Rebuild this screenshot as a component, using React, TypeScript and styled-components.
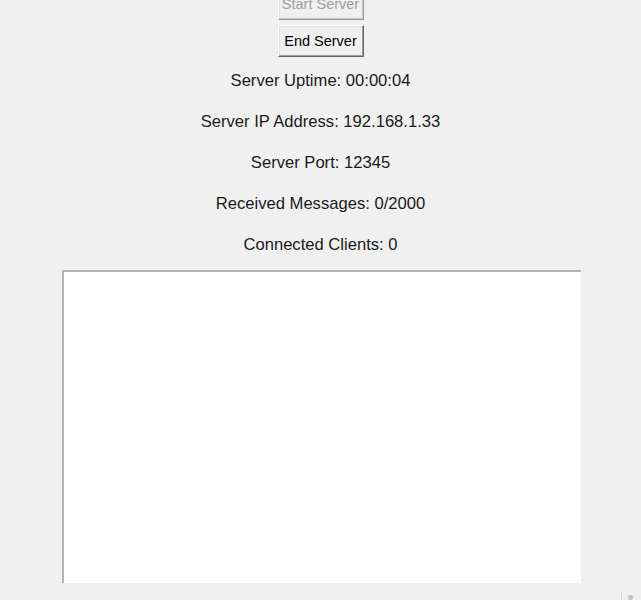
import React from "react";
import styled, { createGlobalStyle } from "styled-components";

const Global = createGlobalStyle`
  html, body { margin: 0; padding: 0; background: #f0f0f0; }
  body { font-family: "Liberation Sans", Arial, sans-serif; overflow: hidden; }
`;

const Window = styled.div`
  width: 641px;
  height: 600px;
  background: #f0f0f0;
  display: flex;
  flex-direction: column;
  align-items: center;
  overflow: hidden;
  position: relative;
`;

const Button = styled.button<{ $disabled?: boolean; $first?: boolean }>`
  box-sizing: border-box;
  width: 86px;
  height: 32px;
  margin-top: ${(p) => (p.$first ? "-12px" : "5px")};
  padding: 0;
  background: #f0f0f0;
  font-family: "Liberation Sans", Arial, sans-serif;
  font-size: 14.5px;
  color: ${(p) => (p.$disabled ? "#a0a0a0" : "#000")};
  border-style: solid;
  border-width: 1px;
  border-color: ${(p) =>
    p.$disabled ? "#ffffff #9a9a9a #9a9a9a #ffffff" : "#ffffff #646464 #646464 #ffffff"};
  box-shadow: inset -1px -1px 0 ${(p) => (p.$disabled ? "#c8c8c8" : "#a0a0a0")},
    inset 1px 1px 0 #e3e3e3;
  cursor: default;
`;

const InfoList = styled.div`
  margin-top: 3px;
  display: flex;
  flex-direction: column;
  align-items: center;
`;

const InfoLabel = styled.div`
  font-size: 16.6px;
  line-height: 41px;
  height: 41px;
  color: #1a1a1a;
  white-space: nowrap;
`;

const LogBox = styled.div`
  box-sizing: border-box;
  margin-top: 5px;
  width: 519px;
  height: 313px;
  background: #ffffff;
  border-top: 2px solid #b4b4b4;
  border-left: 2px solid #b4b4b4;
  margin-left: 2px;
`;

const ScrollMark = styled.div`
  position: absolute;
  left: 621px;
  top: 592px;
  width: 1px;
  height: 8px;
  background: #d8d8d8;
`;

const ScrollDot = styled.div`
  position: absolute;
  left: 628px;
  top: 595px;
  width: 5px;
  height: 5px;
  border-radius: 2px;
  background: #c4c4c4;
`;

const info = [
  "Server Uptime: 00:00:04",
  "Server IP Address: 192.168.1.33",
  "Server Port: 12345",
  "Received Messages: 0/2000",
  "Connected Clients: 0",
];

export default function App() {
  return (
    <>
      <Global />
      <Window>
        <Button $first $disabled>Start Server</Button>
        <Button>End Server</Button>
        <InfoList>
          {info.map((t) => (
            <InfoLabel key={t}>{t}</InfoLabel>
          ))}
        </InfoList>
        <LogBox />
        <ScrollMark />
        <ScrollDot />
      </Window>
    </>
  );
}
